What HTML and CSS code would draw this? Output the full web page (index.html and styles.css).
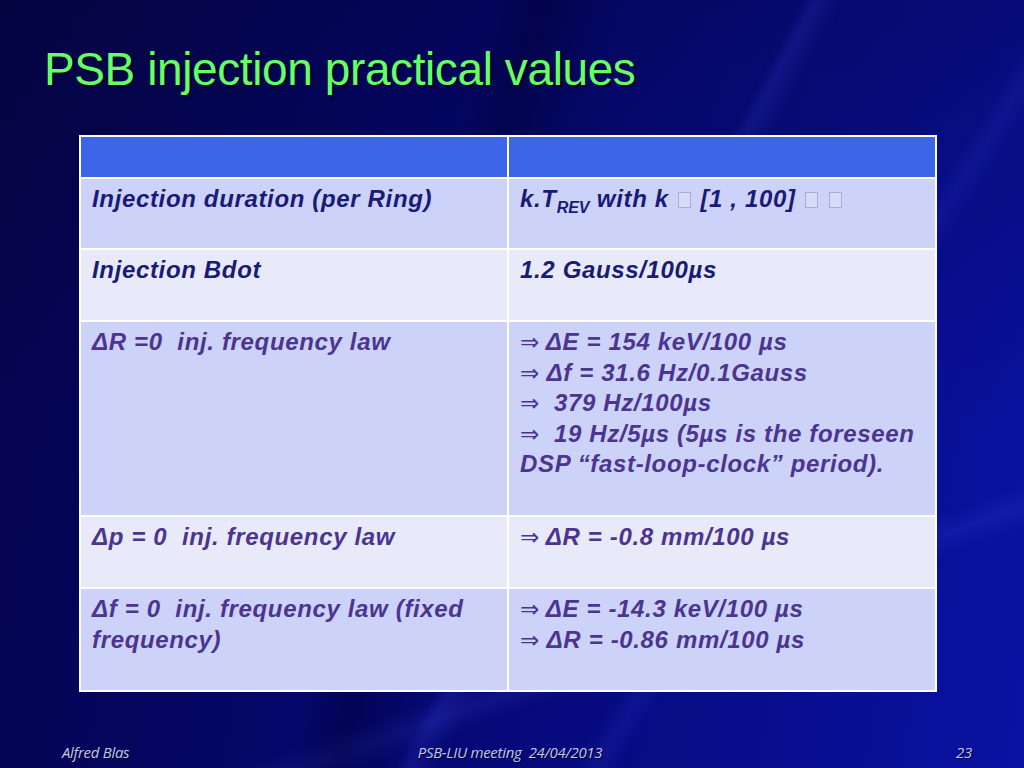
FILE: index.html
```html
<!DOCTYPE html>
<html>
<head>
<meta charset="utf-8">
<link rel="stylesheet" href="styles.css">
</head>
<body>
<div class="slide">
  <h1 class="title">PSB injection practical values</h1>
  <table class="grid">
    <tr class="head"><td></td><td></td></tr>
    <tr class="r1 alt"><td class="navy">Injection duration (per Ring)</td><td class="navy">k.T<sub>REV</sub> with k <span class="tofu"></span> [1 , 100] <span class="tofu"></span> <span class="tofu"></span></td></tr>
    <tr class="r2"><td class="navy">Injection Bdot</td><td class="navy">1.2 Gauss/100µs</td></tr>
    <tr class="r3 alt"><td>ΔR =0&nbsp; inj. frequency law</td><td><span class="arr">⇒</span> ΔE = 154 keV/100 µs<br><span class="arr">⇒</span> Δf = 31.6 Hz/0.1Gauss<br><span class="arr">⇒</span>&nbsp; 379 Hz/100µs<br><span class="arr">⇒</span>&nbsp; 19 Hz/5µs (5µs is the foreseen DSP “fast-loop-clock” period).</td></tr>
    <tr class="r4"><td>Δp = 0&nbsp; inj. frequency law</td><td><span class="arr">⇒</span> ΔR = -0.8 mm/100 µs</td></tr>
    <tr class="r5 alt"><td>Δf = 0&nbsp; inj. frequency law (fixed frequency)</td><td><span class="arr">⇒</span> ΔE = -14.3 keV/100 µs<br><span class="arr">⇒</span> ΔR = -0.86 mm/100 µs</td></tr>
  </table>
  <div class="footer">
    <span class="f-left">Alfred Blas</span>
    <span class="f-mid">PSB-LIU meeting&nbsp; 24/04/2013</span>
    <span class="f-right">23</span>
  </div>
</div>
</body>
</html>
```
FILE: styles.css
```css
html, body {
  margin: 0;
  padding: 0;
}
body {
  width: 1024px;
  height: 768px;
  overflow: hidden;
}
.slide {
  width: 1024px;
  height: 768px;
  box-sizing: border-box;
  display: flex;
  flex-direction: column;
  background:
    linear-gradient(118deg, transparent 56%, rgba(70, 90, 255, 0.14) 57%, transparent 59%),
    linear-gradient(122deg, transparent 70%, rgba(60, 80, 255, 0.12) 71.5%, transparent 73%),
    linear-gradient(105deg, transparent 40%, rgba(0, 0, 40, 0.35) 44%, transparent 50%),
    linear-gradient(160deg, transparent 75%, rgba(90, 110, 255, 0.10) 77%, transparent 79%),
    linear-gradient(to bottom, rgba(0, 0, 30, 0.25), rgba(0, 0, 40, 0) 55%),
    linear-gradient(100deg, #05054c 0%, #05066c 40%, #0a12a2 100%);
  font-family: "Liberation Sans", Arial, sans-serif;
}
.title {
  margin: 46px 0 0 44px;
  font-weight: normal;
  font-size: 46px;
  line-height: 46px;
  color: #66ff66;
  text-shadow: 2px 2px 1px #000028;
  letter-spacing: -0.4px;
}
.grid {
  margin: 43px 0 0 79px;
  width: 858px;
  border-collapse: collapse;
  table-layout: fixed;
}
.grid td {
  width: 50%;
  border: 2px solid #ffffff;
  vertical-align: top;
  padding: 5px 8px 0 11px;
  font-size: 24px;
  letter-spacing: 0.65px;
  font-weight: bold;
  font-style: italic;
  line-height: 30.6px;
  color: #4b3590;
  background: #e8eafa;
}
.grid tr.alt td {
  background: #cdd2f8;
}
.grid tr.head td {
  background: #3d65e8;
  padding: 0;
}
.grid td.navy {
  color: #1a1a78;
}
.head { height: 42px; }
.r1 { height: 71px; }
.r2 { height: 72px; }
.r3 { height: 195px; }
.r4 { height: 72px; }
.r5 { height: 103px; }
sub {
  font-size: 16px;
  line-height: 0;
  vertical-align: -6px;
  letter-spacing: 0;
}
.arr {
  font-family: "DejaVu Sans", sans-serif;
  font-weight: normal;
  font-style: normal;
  font-size: 23px;
  line-height: 1;
  letter-spacing: 0;
}
.tofu {
  display: inline-block;
  width: 11px;
  height: 14px;
  border: 1px solid #a8acd8;
  background: #d8dbf8;
  vertical-align: -1px;
  margin: 0 2px;
}
.footer {
  margin-top: auto;
  height: 26px;
  display: grid;
  grid-template-columns: 1fr auto 1fr;
  align-items: start;
  padding: 0 52px 0 62px;
  font-family: "Open Sans", sans-serif;
  font-style: italic;
  font-size: 15px;
  letter-spacing: -0.3px;
  color: #c4c6ee;
  text-shadow: 1px 1px 0 #000030;
}
.f-mid {
  text-align: center;
  margin-right: 14px;
}
.f-right {
  text-align: right;
}
```
